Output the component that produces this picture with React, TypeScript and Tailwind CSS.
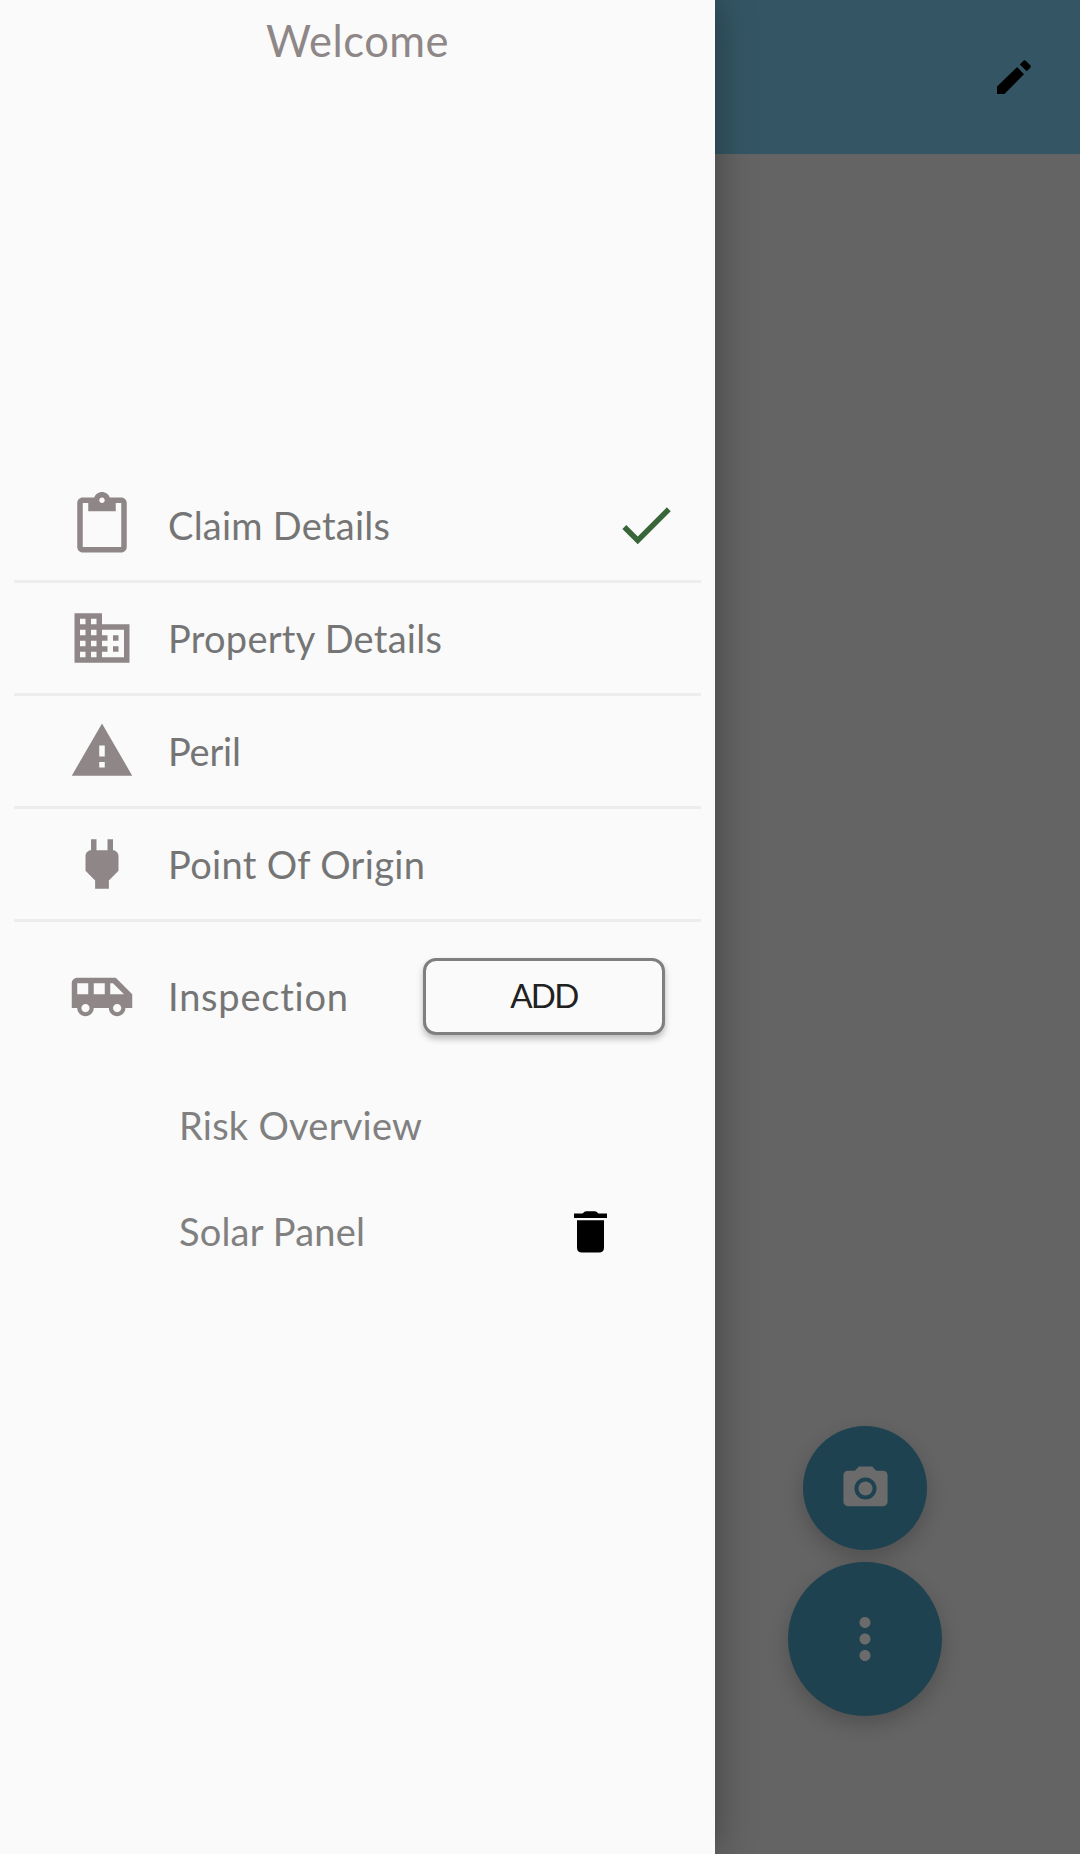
import React from 'react';

const ICONS = {
  clipboard:
    'M19 2h-4.18C14.4.84 13.3 0 12 0c-1.3 0-2.4.84-2.82 2H5c-1.1 0-2 .9-2 2v16c0 1.1.9 2 2 2h14c1.1 0 2-.9 2-2V4c0-1.1-.9-2-2-2zm-7 0c.55 0 1 .45 1 1s-.45 1-1 1-1-.45-1-1 .45-1 1-1zm7 18H5V4h2v3h10V4h2v16z',
  building:
    'M12 7V3H2v18h20V7H12zM6 19H4v-2h2v2zm0-4H4v-2h2v2zm0-4H4V9h2v2zm0-4H4V5h2v2zm4 12H8v-2h2v2zm0-4H8v-2h2v2zm0-4H8V9h2v2zm0-4H8V5h2v2zm10 12h-8v-2h2v-2h-2v-2h2v-2h-2V9h8v10zm-2-8h-2v2h2v-2zm0 4h-2v2h2v-2z',
  warning: 'M1 21h22L12 2 1 21zm12-3h-2v-2h2v2zm0-4h-2v-4h2v4z',
  plug: 'M16.01 7L16 3h-2v4h-4V3H8v4h-.01C7 6.99 6 7.99 6 8.99v5.49L9.5 18v3h5v-3l3.5-3.51v-5.5c0-1-1-2-1.99-1.99z',
  van: 'M17 5H3c-1.1 0-2 .89-2 2v9h2c0 1.65 1.34 3 3 3s3-1.35 3-3h5.5c0 1.65 1.34 3 3 3s3-1.35 3-3H23v-5l-6-6zM3 11V7h4v4H3zm3 6.5c-.83 0-1.5-.67-1.5-1.5s.67-1.5 1.5-1.5 1.5.67 1.5 1.5-.67 1.5-1.5 1.5zm7-6.5H9V7h4v4zm4.5 6.5c-.83 0-1.5-.67-1.5-1.5s.67-1.5 1.5-1.5 1.5.67 1.5 1.5-.67 1.5-1.5 1.5zM15 11V7h1l4 4h-5z',
  check: 'M9 16.17L4.83 12l-1.42 1.41L9 19 21 7l-1.41-1.41z',
  camera:
    'M12 8.8a3.2 3.2 0 1 0 0 6.4 3.2 3.2 0 0 0 0-6.4zM9 2L7.17 4H4c-1.1 0-2 .9-2 2v12c0 1.1.9 2 2 2h16c1.1 0 2-.9 2-2V6c0-1.1-.9-2-2-2h-3.17L15 2H9zm3 15c-2.76 0-5-2.24-5-5s2.24-5 5-5 5 2.24 5 5-2.24 5-5 5z',
  more: 'M12 8c1.1 0 2-.9 2-2s-.9-2-2-2-2 .9-2 2 .9 2 2 2zm0 2c-1.1 0-2 .9-2 2s.9 2 2 2 2-.9 2-2-.9-2-2-2zm0 6c-1.1 0-2 .9-2 2s.9 2 2 2 2-.9 2-2-.9-2-2-2z',
};

function Icon({ name, className }: { name: keyof typeof ICONS; className: string }) {
  return (
    <svg viewBox="0 0 24 24" fill="currentColor" fillRule="evenodd" className={`shrink-0 ${className}`}>
      <path d={ICONS[name]} />
    </svg>
  );
}

const ROWS: { icon: keyof typeof ICONS; label: string; spacing: string; done?: boolean }[] = [
  { icon: 'clipboard', label: 'Claim Details', spacing: 'tracking-[0.25px]', done: true },
  { icon: 'building', label: 'Property Details', spacing: 'tracking-[0.27px]' },
  { icon: 'warning', label: 'Peril', spacing: 'tracking-[-0.2px]' },
  { icon: 'plug', label: 'Point Of Origin', spacing: 'tracking-[0.32px]' },
];

function Drawer() {
  return (
    <aside className="relative z-10 flex w-[715px] shrink-0 flex-col bg-[#fafafa] shadow-[0_0_36px_rgba(0,0,0,0.35)]">
      <h1 className="h-[470px] pt-3 text-center text-[43.5px] leading-[56px] tracking-[0.5px] text-[#8f8787]">
        Welcome
      </h1>
      <nav className="px-3.5">
        {ROWS.map((row) => (
          <div
            key={row.label}
            className="flex h-[113px] items-center border-b-[3px] border-[#ededed] pr-[22px] pl-[55px]"
          >
            <Icon name={row.icon} className="size-[66px] text-[#8f8787]" />
            <span className={`ml-[33px] flex-1 text-[38px] leading-[48px] text-[#757575] ${row.spacing}`}>
              {row.label}
            </span>
            {row.done && <Icon name="check" className="size-[66px] text-[#386638]" />}
          </div>
        ))}
      </nav>
      <div className="mb-0.5 flex h-[148px] items-center pr-[50px] pl-[69px]">
        <Icon name="van" className="mt-0.5 size-[66px] text-[#8f8787]" />
        <span className="ml-[33px] flex-1 text-[38px] leading-[48px] tracking-[0.78px] text-[#757575]">Inspection</span>
        <button className="h-[77px] w-[242px] rounded-[13px] border-[3px] border-[#7f7f7f] bg-[#fafafa] text-[33px] tracking-[-1.6px] text-[#212121] shadow-[0_4px_6px_rgba(0,0,0,0.25)]">
          ADD
        </button>
      </div>
      <ul className="pr-[108px] pl-[179px] text-[38px] leading-[48px] text-[#808080]">
        <li className="flex h-[106px] items-center tracking-[0.25px]">Risk Overview</li>
        <li className="flex h-[106px] items-center justify-between tracking-[0.2px]">
          Solar Panel
          <svg viewBox="0 0 33 42" fill="#000" className="mt-0.5 h-[42px] w-[33px]">
            <path d="M0 2.5H8.500L10.500 .8Q11.200 .2 12.200 .2H20.800Q21.800 .2 22.500 .8L24.500 2.500H33V7H0Z" />
            <path d="M3 9.200H30V36.500Q30 41.600 25 41.600H8Q3 41.600 3 36.500Z" />
          </svg>
        </li>
      </ul>
    </aside>
  );
}

export default function App() {
  return (
    <div className="flex h-[1854px] w-[1080px] overflow-hidden bg-[#646464] font-[Lato,sans-serif]">
      <Drawer />
      <main className="flex flex-1 flex-col">
        <header className="flex h-[154px] items-center justify-end bg-[#345664] pr-[49px]">
          <svg viewBox="0 0 34 34" fill="#000" className="size-[34px]">
            <path d="M0 26.500V34H7.500L27 14.200L20.200 7Z" />
            <path d="M22.800 4.400L26.200 .9Q27.500 -.3 28.900 .9L33.100 5.100Q34.300 6.500 33.100 7.900L29.700 11.300Z" />
          </svg>
        </header>
        <div className="flex flex-1 flex-col items-center justify-end gap-3 pr-[65px] pb-[138px] text-[#6b6b6b]">
          <button className="flex size-[124px] items-center justify-center rounded-full bg-[#1e4250] shadow-[0_8px_20px_rgba(0,0,0,0.2)]">
            <Icon name="camera" className="size-[53px]" />
          </button>
          <button className="flex size-[154px] items-center justify-center rounded-full bg-[#1e4250] shadow-[0_8px_20px_rgba(0,0,0,0.2)]">
            <Icon name="more" className="size-[66px]" />
          </button>
        </div>
      </main>
    </div>
  );
}
